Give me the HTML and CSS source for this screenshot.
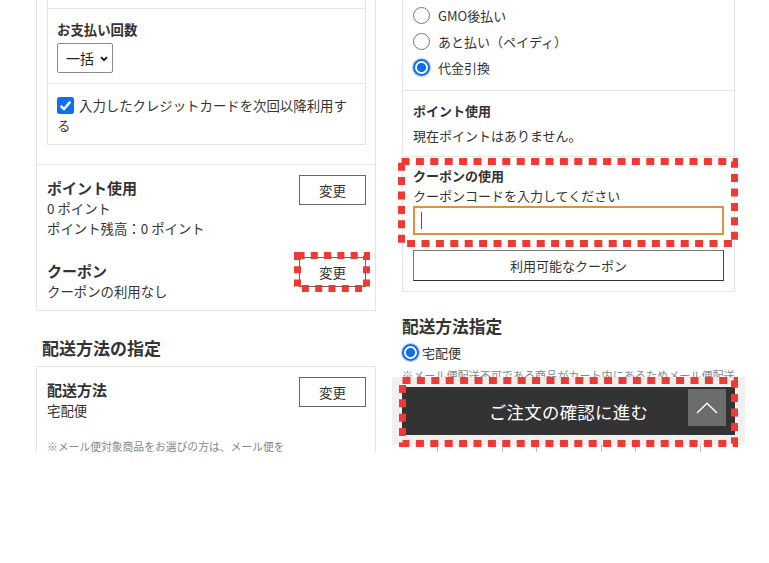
FILE: index.html
```html
<!DOCTYPE html>
<html lang="ja">
<head>
<meta charset="utf-8">
<title>注文手続き</title>
<link rel="stylesheet" href="styles.css">
</head>
<body>
<div class="stage">
  <section class="phone phone-left">
    <div class="outer-card">
      <div class="outer-sec pay-sec">
        <div class="inner-card">
          <div class="inner-prev"></div>
          <div class="inner-sec inst">
            <div class="label-b">お支払い回数</div>
            <div class="select">
              <span>一括</span>
              <svg class="chev" width="8" height="6" viewBox="0 0 8 6"><path d="M1 1.2 L4 4.2 L7 1.2" fill="none" stroke="#111" stroke-width="1.8"/></svg>
            </div>
          </div>
          <div class="inner-sec save">
            <label class="check"><span class="cbox"><svg width="17" height="17" viewBox="0 0 17 17"><rect width="17" height="17" rx="2.5" fill="#0b6ff0"/><path d="M3.6 8.8 L7 12.1 L13.4 4.6" fill="none" stroke="#fff" stroke-width="2.4"/></svg></span>入力したクレジットカードを次回以降利用する</label>
          </div>
        </div>
      </div>
      <div class="outer-sec pts-sec">
        <div class="row">
          <div class="row-text">
            <div class="title">ポイント使用</div>
            <div class="line">0 ポイント</div>
            <div class="line">ポイント残高：0 ポイント</div>
          </div>
          <button class="btn-change">変更</button>
        </div>
        <div class="row row-coupon">
          <div class="row-text">
            <div class="title">クーポン</div>
            <div class="line">クーポンの利用なし</div>
          </div>
          <button class="btn-change">変更</button>
        </div>
      </div>
    </div>
    <h2 class="sec-heading">配送方法の指定</h2>
    <div class="deliv-card">
      <div class="row">
        <div class="row-text">
          <div class="title">配送方法</div>
          <div class="line">宅配便</div>
        </div>
        <button class="btn-change">変更</button>
      </div>
      <p class="note">※メール便対象商品をお選びの方は、メール便を</p>
    </div>
  </section>

  <section class="phone phone-right">
    <div class="r-card">
      <div class="r-sec radio-sec">
        <div class="radio-row"><span class="radio"></span>GMO後払い</div>
        <div class="radio-row"><span class="radio"></span>あと払い（ペイディ）</div>
        <div class="radio-row"><span class="radio on"></span>代金引換</div>
      </div>
      <div class="r-sec r-pts">
        <div class="r-title">ポイント使用</div>
        <div class="r-text">現在ポイントはありません。</div>
      </div>
      <div class="r-sec r-coupon">
        <div class="r-title">クーポンの使用</div>
        <div class="r-line">クーポンコードを入力してください</div>
        <div class="code-input"><span class="caret"></span></div>
        <button class="btn-wide">利用可能なクーポン</button>
      </div>
    </div>
    <h2 class="r-heading">配送方法指定</h2>
    <div class="radio-row r-ship"><span class="radio on"></span>宅配便</div>
    <p class="r-note">※メール便配送不可である商品がカート内にあるためメール便配送</p>
    <h2 class="r-heading r-heading2">お届け日時指定</h2>
    <div class="date-row"><span class="date-box"></span><span class="date-box"></span><span class="date-box"></span></div>

    <div class="bottom-bar">
      <button class="btn-order">ご注文の確認に進む</button>
      <span class="page-top"><svg width="22" height="12" viewBox="0 0 22 12"><path d="M1 11 L11 1.2 L21 11" fill="none" stroke="#fff" stroke-width="1.4"/></svg></span>
    </div>
  </section>
</div>

<div class="marks">
  <svg class="mark mark-change" width="76" height="40" viewBox="0 0 76 40"><rect x="3.5" y="3.5" width="69" height="33" fill="none" stroke="#ee3a33" stroke-width="7" stroke-dasharray="7 6.3"/></svg>
  <svg class="mark mark-coupon" width="340" height="89" viewBox="0 0 340 89"><rect x="3.5" y="3.5" width="333" height="82" fill="none" stroke="#ee3a33" stroke-width="7" stroke-dasharray="8 6.4"/></svg>
  <svg class="mark mark-order" width="339" height="70" viewBox="0 0 339 70"><rect x="3.5" y="3.5" width="332" height="63" fill="none" stroke="#ee3a33" stroke-width="7" stroke-dasharray="8 6.4"/></svg>
</div>
</body>
</html>
```

FILE: styles.css
```css
* { box-sizing: border-box; }
html, body { margin: 0; padding: 0; background: #fff; }
body {
  width: 769px;
  height: 563px;
  position: relative;
  overflow: hidden;
  font-family: "Noto Sans CJK JP", "Noto Sans", sans-serif;
  color: #333;
}
button { font-family: inherit; cursor: pointer; }
h2, p { margin: 0; }

.stage {
  display: flex;
  align-items: flex-start;
  gap: 16px;
  padding-left: 36px;
}
.phone {
  height: 452px;
  overflow: hidden;
  position: relative;
}

/* ---------- left phone ---------- */
.phone-left { width: 340px; font-size: 13.4px; }
.outer-card { border: 1px solid #e4e4e4; border-top: 0; }
.outer-sec { border-bottom: 1px solid #e4e4e4; }
.pay-sec { padding: 0 9px 19px 10px; }
.inner-card { border: 1px solid #e4e4e4; border-top: 0; }
.inner-prev { height: 9px; border-bottom: 1px solid #e4e4e4; }
.inner-sec { border-bottom: 1px solid #e4e4e4; }
.inner-sec:last-child { border-bottom: 0; }
.inst { padding: 10px 9px 10px; }
.label-b { font-weight: bold; line-height: 20px; }
.select {
  margin-top: 4px;
  width: 56px;
  height: 30px;
  border: 1px solid #8a8a8a;
  border-radius: 2px;
  display: flex;
  align-items: center;
  padding-left: 8px;
  gap: 6px;
  font-size: 14px;
  color: #222;
}
.chev { margin-top: 1px; }
.save { padding: 11px 9px 9px; }
.check { line-height: 20px; display: block; }
.cbox {
  display: inline-block;
  width: 17px;
  height: 17px;
  vertical-align: -3px;
  margin-right: 5px;
}
.cbox svg { display: block; }

.pts-sec { padding: 10px 9px 9px 10px; border-bottom: 0; }
.row {
  display: flex;
  justify-content: space-between;
  align-items: flex-start;
}
.row-text { padding-top: 2px; }
.row-coupon { margin-top: 19px; }
.row-coupon .row-text { padding-top: 3px; }
.title { font-size: 15px; font-weight: bold; line-height: 21px; }
.line { line-height: 20px; }
.btn-change {
  flex: none;
  width: 67px;
  height: 30px;
  border: 1px solid #666;
  background: #fff;
  color: #333;
  font-size: 13.5px;
  padding: 0;
}

.sec-heading {
  font-size: 17px;
  font-weight: bold;
  line-height: 24px;
  margin: 25px 0 6px;
  padding-left: 6px;
}
.deliv-card {
  border: 1px solid #e4e4e4;
  padding: 10px 9px 10px 10px;
}
.note {
  margin-top: 18px;
  font-size: 10.8px;
  line-height: 16px;
  color: #888;
}

/* ---------- right phone ---------- */
.phone-right { width: 353px; padding: 0 10px; font-size: 13px; }
.r-card { border: 1px solid #e4e4e4; border-top: 0; }
.r-sec { border-bottom: 1px solid #e4e4e4; padding: 0 10px; }
.r-sec:last-child { border-bottom: 0; }
.radio-sec { padding-top: 2px; padding-bottom: 10px; }
.radio-row {
  display: flex;
  align-items: center;
  gap: 8px;
  height: 26px;
}
.radio {
  flex: none;
  width: 17px;
  height: 17px;
  border-radius: 50%;
  border: 1px solid #767676;
  background: #fff;
}
.radio.on {
  border: 2px solid #0b6ff0;
  background: radial-gradient(circle, #0b6ff0 0 4.2px, #fff 4.8px);
  box-shadow: 0 0 0 1px #a9c9f5;
}
.r-pts { padding-top: 10px; padding-bottom: 10px; }
.r-title { font-weight: bold; line-height: 20px; }
.r-text { margin-top: 5px; line-height: 20px; }
.r-coupon { padding-top: 9px; padding-bottom: 10px; }
.r-line { line-height: 20px; }
.code-input {
  height: 29px;
  border: 2px solid #e0913d;
  background: #fff;
  display: flex;
  align-items: center;
  padding-left: 6px;
}
.caret { width: 1px; height: 17px; background: #555; }
.btn-wide {
  margin-top: 15px;
  display: block;
  width: 100%;
  height: 31px;
  border: 1px solid #777;
  border-bottom-color: #333;
  border-right-color: #444;
  background: #fff;
  color: #333;
  font-size: 13px;
  padding: 0;
}
.r-heading {
  font-size: 16.7px;
  font-weight: bold;
  line-height: 24px;
  margin-top: 22px;
  margin-bottom: 2px;
}
.r-ship { height: 24px; gap: 3px; }
.r-note {
  margin-top: 3px;
  font-size: 11.1px;
  line-height: 16px;
  color: #888;
  white-space: nowrap;
  overflow: hidden;
}
.r-heading2 { margin-top: 26px; margin-bottom: 0; color: #555; }
.date-row { display: flex; gap: 33px; padding-left: 35px; }
.date-box { width: 66px; height: 30px; border: 1px solid #bbb; border-radius: 2px; }

.bottom-bar {
  position: absolute;
  left: 0;
  right: 0;
  top: 377px;
  height: 68px;
  background: rgba(238, 238, 238, 0.9);
  padding: 10px 10px 0;
}
.btn-order {
  display: block;
  width: 333px;
  height: 48px;
  border: 0;
  background: #333;
  color: #fff;
  font-size: 17.4px;
  padding: 0;
  letter-spacing: 0.3px;
}
.page-top {
  position: absolute;
  left: 296px;
  top: 12px;
  width: 38px;
  height: 37px;
  background: #6c6c6c;
  display: flex;
  align-items: center;
  justify-content: center;
}
.page-top svg { display: block; }

/* ---------- annotation marks ---------- */
.marks { position: absolute; left: 0; top: 0; }
.mark { position: absolute; display: block; }
.mark-change { left: 294px; top: 252px; }
.mark-coupon { left: 398px; top: 158px; }
.mark-order { left: 399px; top: 377px; }
```
